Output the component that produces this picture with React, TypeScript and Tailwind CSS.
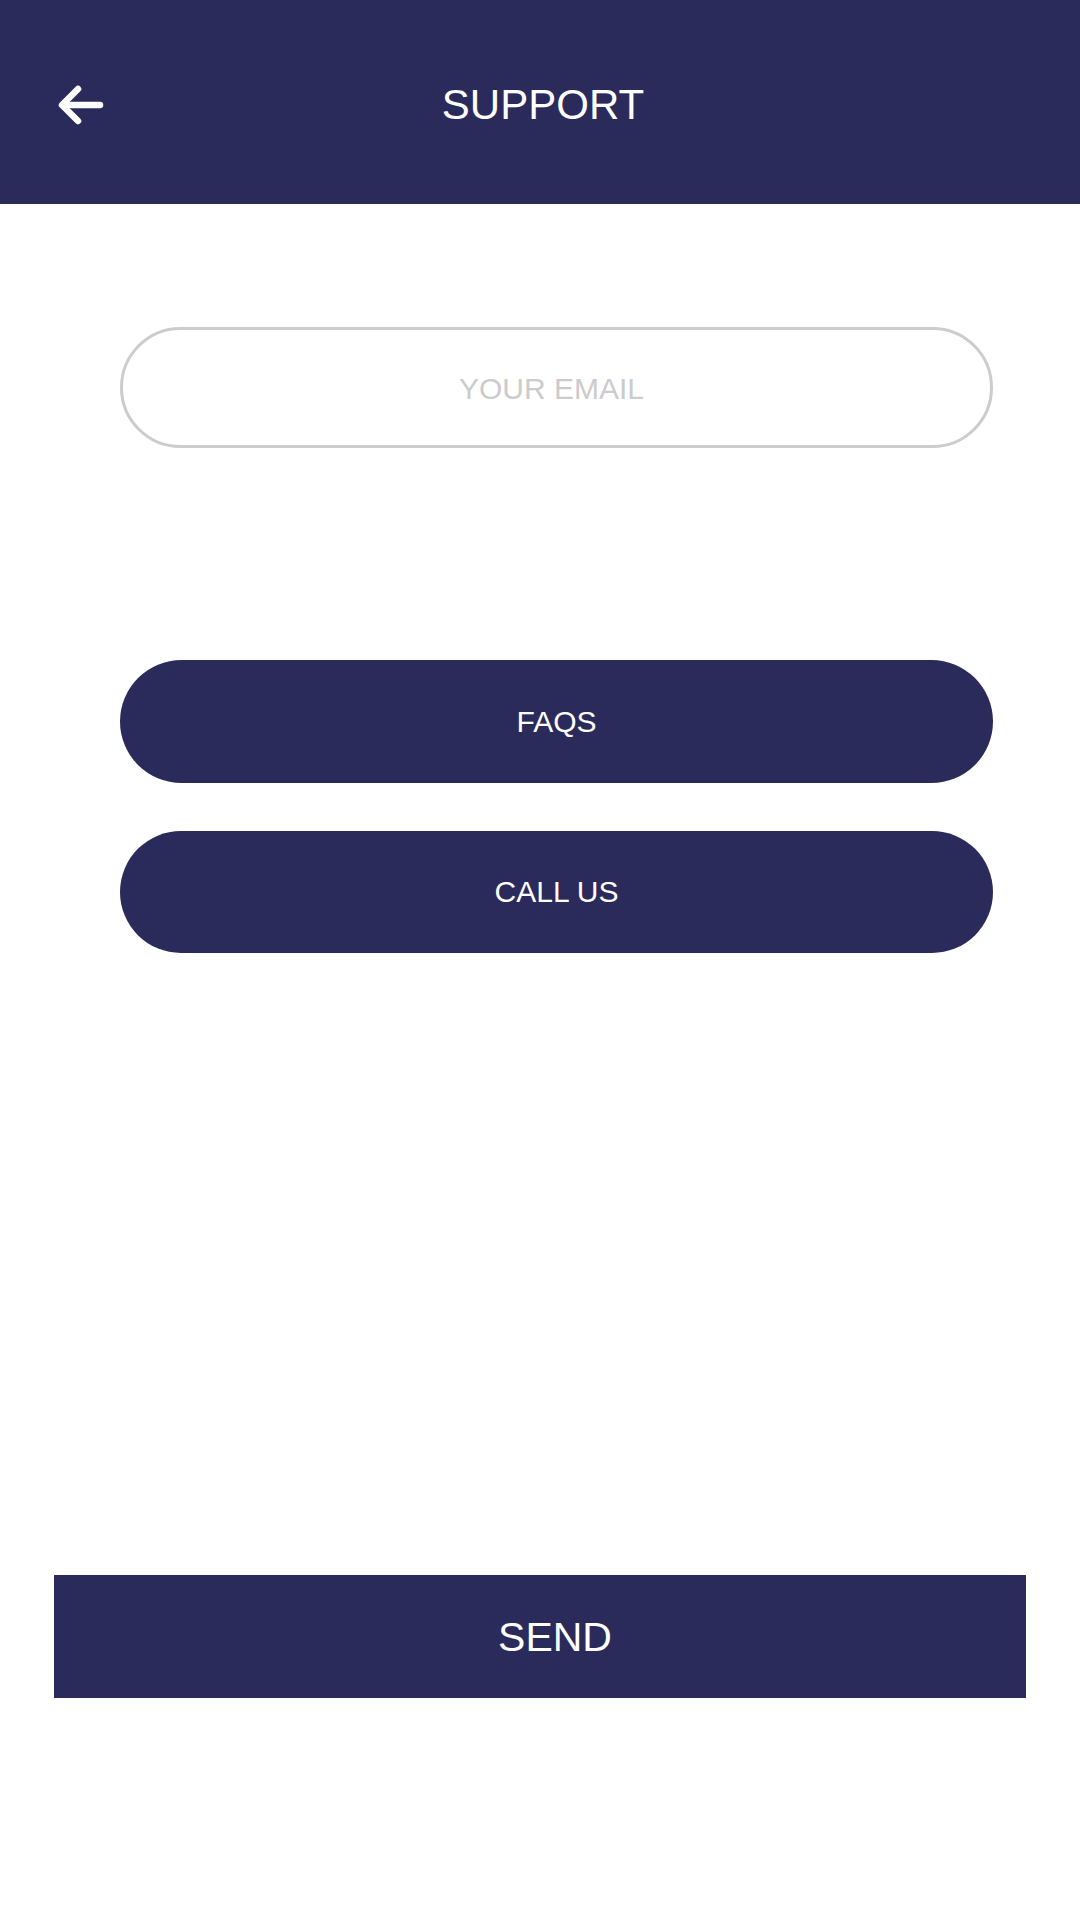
import React from "react";

export default function App() {
  const font = { fontFamily: '"Liberation Sans", Arial, sans-serif' };
  return (
    <div className="w-[1080px] h-[1920px] bg-white flex flex-col" style={font}>
      <header className="relative h-[204px] bg-[#2b2b5b] flex items-center justify-center shrink-0">
        <svg
          className="absolute left-[55px] top-[84px]"
          width="52"
          height="42"
          viewBox="55 84 52 42"
          fill="none"
          stroke="white"
          strokeWidth="6.5"
          strokeLinecap="round"
          strokeLinejoin="round"
        >
          <path d="M100 105 H63" />
          <path d="M78 89 L62 105 L78 121" />
        </svg>
        <h1 className="text-white text-[42px] leading-none pl-[6px] pt-[6px]">SUPPORT</h1>
      </header>

      <div className="ml-[120px] mt-[123px] w-[873px] h-[121px] rounded-full border-[3px] border-[#cccccc] flex items-center justify-center">
        <span className="text-[#cccccc] text-[30px] leading-none pr-[10px] pt-[2px]">YOUR EMAIL</span>
      </div>

      <button className="ml-[120px] mt-[212px] w-[873px] h-[123px] rounded-full bg-[#2b2b5b] flex items-center justify-center text-white text-[30px] leading-none">
        FAQS
      </button>

      <button className="ml-[120px] mt-[48px] w-[873px] h-[122px] rounded-full bg-[#2b2b5b] flex items-center justify-center text-white text-[30px] leading-none">
        CALL US
      </button>

      <button className="ml-[54px] mt-[622px] w-[972px] h-[123px] bg-[#2b2b5b] flex items-center justify-center text-white text-[41px] leading-none pl-[30px] pt-[2px]">
        SEND
      </button>
    </div>
  );
}
